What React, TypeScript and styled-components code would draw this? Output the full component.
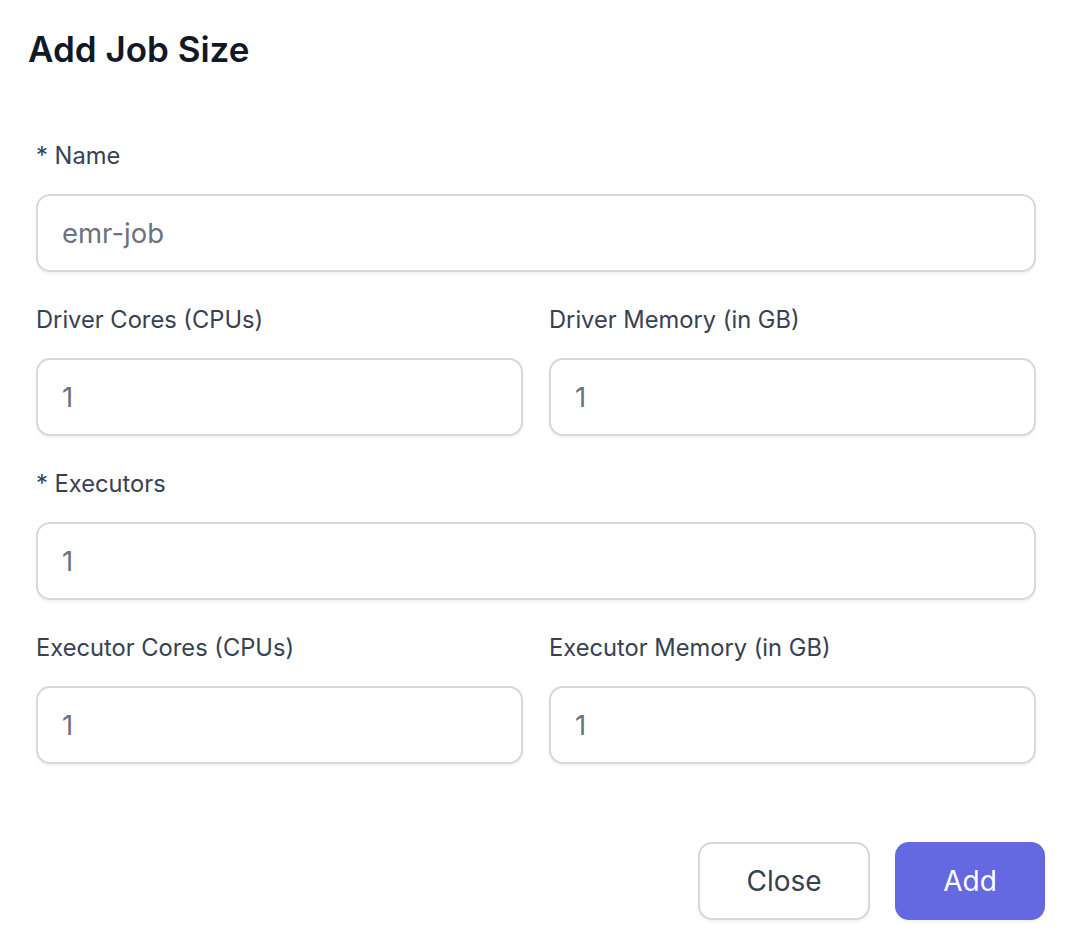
import React from 'react';
import styled, { createGlobalStyle } from 'styled-components';

const GlobalStyle = createGlobalStyle`
  html, body {
    margin: 0;
    padding: 0;
    background: #ffffff;
  }
  body {
    font-family: Inter, "Noto Sans", "Liberation Sans", sans-serif;
    -webkit-font-smoothing: antialiased;
  }
  * {
    box-sizing: border-box;
  }
`;

const Page = styled.div`
  width: 1070px;
  height: 940px;
  padding-top: 29px;
  display: flex;
  flex-direction: column;
`;

const Title = styled.h1`
  margin: 0 0 0 28px;
  font-size: 35px;
  line-height: 40px;
  font-weight: 600;
  color: #111827;
`;

const Form = styled.div`
  margin: 71px 34px 0 36px;
  display: flex;
  flex-direction: column;
  gap: 32px;
`;

const Row = styled.div`
  display: grid;
  grid-template-columns: 1fr 1fr;
  column-gap: 26px;
`;

const Field = styled.div`
  display: flex;
  flex-direction: column;
  gap: 22px;
`;

const Label = styled.label`
  font-size: 23.7px;
  line-height: 32px;
  font-weight: 400;
  color: #374151;
`;

const Input = styled.input`
  height: 78px;
  width: 100%;
  padding: 0 24px;
  border: 2px solid #d5d8de;
  border-radius: 14px;
  font-family: inherit;
  font-size: 27.5px;
  color: #6b7280;
  background: #ffffff;
  box-shadow: 0 2px 3px rgba(0, 0, 0, 0.05);
  outline: none;
`;

const Footer = styled.div`
  margin: 78px 25px 0 0;
  display: flex;
  justify-content: flex-end;
  gap: 25px;
`;

const Button = styled.button<{ $primary?: boolean }>`
  height: 78px;
  width: ${({ $primary }) => ($primary ? '150px' : '172px')};
  border-radius: 14px;
  font-family: inherit;
  font-size: 28px;
  font-weight: 400;
  cursor: pointer;
  border: ${({ $primary }) => ($primary ? 'none' : '2px solid #d5d8de')};
  background: ${({ $primary }) => ($primary ? '#6469e2' : '#ffffff')};
  color: ${({ $primary }) => ($primary ? '#ffffff' : '#374151')};
  box-shadow: 0 2px 3px rgba(0, 0, 0, 0.05);
`;

interface TextFieldProps {
  label: string;
  value: string;
}

const TextField: React.FC<TextFieldProps> = ({ label, value }) => (
  <Field>
    <Label>{label}</Label>
    <Input defaultValue={value} />
  </Field>
);

const App: React.FC = () => {
  return (
    <>
      <GlobalStyle />
      <Page>
        <Title>Add Job Size</Title>
        <Form>
          <TextField label="* Name" value="emr-job" />
          <Row>
            <TextField label="Driver Cores (CPUs)" value="1" />
            <TextField label="Driver Memory (in GB)" value="1" />
          </Row>
          <TextField label="* Executors" value="1" />
          <Row>
            <TextField label="Executor Cores (CPUs)" value="1" />
            <TextField label="Executor Memory (in GB)" value="1" />
          </Row>
        </Form>
        <Footer>
          <Button>Close</Button>
          <Button $primary>Add</Button>
        </Footer>
      </Page>
    </>
  );
};

export default App;
